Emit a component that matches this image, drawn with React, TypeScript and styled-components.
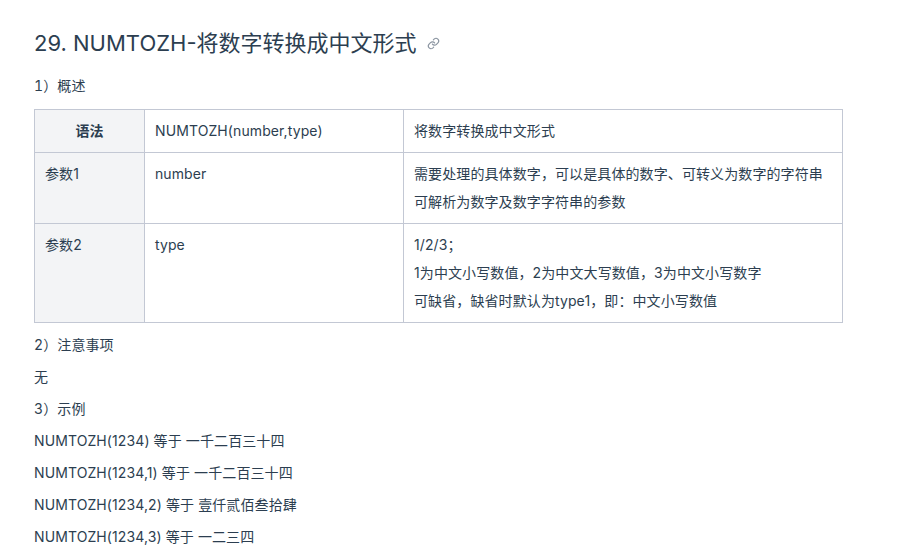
import React from 'react';
import styled, { createGlobalStyle } from 'styled-components';

const GlobalStyle = createGlobalStyle`
  html, body {
    margin: 0;
    padding: 0;
    height: 100%;
    overflow: hidden;
    background-color: #fff;
  }
`;

const Page = styled.div`
  width: 809px;
  padding: 29px 0 0 34px;
  color: #2c3e50;
  font-family: Inter, 'Noto Sans CJK SC', sans-serif;
  font-size: 14px;
  letter-spacing: 0.1px;
`;

const Heading = styled.h2`
  display: flex;
  align-items: center;
  margin: 0 0 19px;
  font-size: 22px;
  font-weight: 400;
  line-height: 28px;
  letter-spacing: 0;
  color: #2c3e50;
`;

const Anchor = styled.a`
  display: flex;
  margin-left: 10px;
  color: #8a94a0;
`;

const Text = styled.p<{ $step?: boolean }>`
  margin: 0 0 12px;
  line-height: 20px;
  font-variant-numeric: ${(props) => (props.$step ? 'tabular-nums' : 'normal')};
`;

const Table = styled.table`
  width: 809px;
  margin: 13px 0 12px;
  border-collapse: collapse;
  table-layout: fixed;
  line-height: 28px;
`;

const Cell = styled.td`
  padding: 7px 10px;
  border: 1px solid #c3c8d4;
  vertical-align: top;
`;

const HeadCell = styled(Cell)`
  background-color: #f3f4f6;
`;

const TitleCell = styled(HeadCell)`
  font-weight: 700;
  text-align: center;
  box-shadow: 0 -1px 0 #c3c8d4;
`;

const Line = styled.div``;

const LinkIcon = () => (
  <svg width="13" height="13" viewBox="0 0 24 24" fill="none" stroke="currentColor" strokeWidth="2.2" strokeLinecap="round">
    <path d="M10 13a5 5 0 0 0 7.5.5l3-3a5 5 0 0 0-7-7l-1.7 1.7" />
    <path d="M14 11a5 5 0 0 0-7.5-.5l-3 3a5 5 0 0 0 7 7l1.7-1.7" />
  </svg>
);

const examples = [
  'NUMTOZH(1234) 等于 一千二百三十四',
  'NUMTOZH(1234,1) 等于 一千二百三十四',
  'NUMTOZH(1234,2) 等于 壹仟贰佰叁拾肆',
  'NUMTOZH(1234,3) 等于 一二三四',
];

export default function App() {
  return (
    <Page>
      <GlobalStyle />
      <Heading>
        29. NUMTOZH-将数字转换成中文形式
        <Anchor>
          <LinkIcon />
        </Anchor>
      </Heading>
      <Text $step>1）概述</Text>
      <Table>
        <colgroup>
          <col width="110" />
          <col width="259" />
          <col width="439" />
        </colgroup>
        <tbody>
          <tr>
            <TitleCell>语法</TitleCell>
            <Cell>NUMTOZH(number,type)</Cell>
            <Cell>将数字转换成中文形式</Cell>
          </tr>
          <tr>
            <HeadCell>参数1</HeadCell>
            <Cell>number</Cell>
            <Cell>
              <Line>需要处理的具体数字，可以是具体的数字、可转义为数字的字符串</Line>
              <Line>可解析为数字及数字字符串的参数</Line>
            </Cell>
          </tr>
          <tr>
            <HeadCell>参数2</HeadCell>
            <Cell>type</Cell>
            <Cell>
              <Line>1/2/3；</Line>
              <Line>1为中文小写数值，2为中文大写数值，3为中文小写数字</Line>
              <Line>可缺省，缺省时默认为type1，即：中文小写数值</Line>
            </Cell>
          </tr>
        </tbody>
      </Table>
      <Text $step>2）注意事项</Text>
      <Text>无</Text>
      <Text $step>3）示例</Text>
      {examples.map((example) => (
        <Text key={example}>{example}</Text>
      ))}
    </Page>
  );
}
